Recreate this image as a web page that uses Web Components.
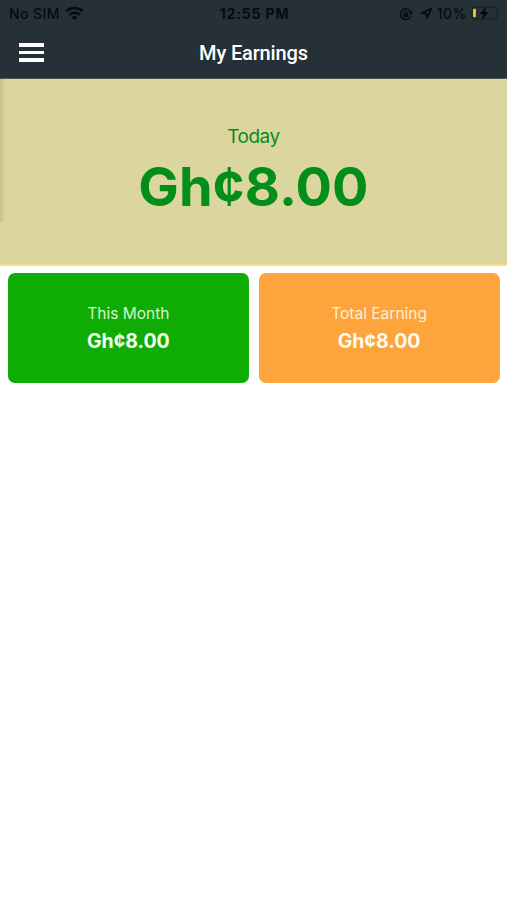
<!DOCTYPE html>
<html lang="en">
<head>
<meta charset="utf-8">
<title>My Earnings</title>
<style>
  body { margin: 0; background: #fff; font-family: Inter, "Liberation Sans", sans-serif; }
</style>
</head>
<body>
<earnings-screen></earnings-screen>
<script>
const define = (name, html) => customElements.define(name, class extends HTMLElement {
  constructor() {
    super();
    this.attachShadow({ mode: "open" }).innerHTML = html;
  }
});

define("status-bar", `
<style>
  :host { display: grid; grid-template-columns: 1fr auto 1fr; align-items: center; height: 27px; box-sizing: border-box;
    padding: 0 6px 0 9px; color: #060b0e; font-size: 14px; line-height: 18px; }
  div { display: flex; align-items: center; white-space: nowrap; }
  .carrier { font-weight: 500; letter-spacing: 0.4px; }
  .time { font-weight: 700; letter-spacing: 0.85px; margin-left: -1px; }
  .right { justify-content: flex-end; font-weight: 500; letter-spacing: 0.5px; }
  svg { display: block; flex: none; }
  .wifi { margin-left: 5px; }
  .nav { margin: 0 4px 0 7px; }
  .battery { margin-left: 4px; }
</style>
<div class="carrier"><span>No SIM</span>
  <svg class="wifi" width="19" height="15" viewBox="0 0 19 15" fill="none" stroke="#060b0e" stroke-width="2.6">
    <path d="M1.2 5.4a12 12 0 0 1 16.6 0M4.3 8.8a7.5 7.5 0 0 1 10.4 0"/><path d="M9.5 14.2 6.7 11.3a4 4 0 0 1 5.6 0z" fill="#060b0e" stroke="none"/>
  </svg></div>
<div class="time">12:55 PM</div>
<div class="right">
  <svg width="14" height="14" viewBox="0 0 14 14" fill="none" stroke="#060b0e" stroke-width="1.5">
    <path d="M11.8 9.3A5.3 5.3 0 1 1 12.1 6"/><path d="M10 5.2h4l-2 2.9z" fill="#060b0e" stroke="none"/>
    <rect x="4.3" y="6.3" width="5" height="3.7" fill="#060b0e" stroke="none"/><path d="M5.4 6.5V5.3a1.4 1.4 0 0 1 2.8 0v1.2" stroke-width="1"/>
  </svg>
  <svg class="nav" width="13" height="13" viewBox="0 0 13 13" fill="none" stroke="#060b0e" stroke-width="1.6" stroke-linejoin="round">
    <path d="M11.3 1.7 1.5 6.1l4.9.5.4 4.9z"/>
  </svg>
  <span>10%</span>
  <svg class="battery" width="30" height="15" viewBox="0 0 30 15">
    <rect x="1" y="1.2" width="25" height="11.6" rx="3" fill="none" stroke="#182326" stroke-width="1.2"/>
    <path d="M27.3 5v4.5q1.7-.6 1.7-2.2T27.3 5z" fill="#182326"/>
    <rect x="2" y="2.8" width="2.9" height="8.4" rx=".8" fill="#e8c32c"/>
    <path d="M15.3 0 8.5 8.2h4.1L10.7 14l7.1-8.1h-4z" fill="#04080a"/>
  </svg>
</div>`);

define("menu-button", `
<style>
  :host { display: flex; flex-direction: column; gap: 4px; width: 25px; }
  i { height: 3.5px; background: #fff; }
</style><i></i><i></i><i></i>`);

define("title-bar", `
<style>
  :host { display: grid; grid-template-columns: 1fr auto 1fr; align-items: center; height: 52px; box-sizing: border-box;
    padding: 0 19px; color: #fff; border-bottom: 1px solid #4e5a50; }
  h1 { margin: 0; font: 500 20px/24px Roboto, sans-serif; letter-spacing: -0.15px; white-space: nowrap; }
</style><slot name="start"></slot><h1><slot></slot></h1>`);

define("today-panel", `
<style>
  :host { display: block; height: 187px; box-sizing: border-box; padding-top: 45px; position: relative;
    background: #dbd59f; border-bottom: 2px solid #f7df85; text-align: center; color: #028e18; white-space: nowrap; }
  .edge { position: absolute; left: 0; top: 0; width: 5px; height: 143px; background: linear-gradient(to right, #c4be8d, #dbd59f); }
  .label { font-size: 19px; line-height: 26px; letter-spacing: -0.5px; }
  .amount { font-size: 54px; line-height: 64px; font-weight: 700; margin-top: 5px; letter-spacing: 0.15px; }
</style><div class="edge"></div>
<div class="label"><slot name="label"></slot></div><div class="amount"><slot></slot></div>`);

define("earning-card", `
<style>
  :host { display: block; height: 110px; box-sizing: border-box; padding-top: 30px; border-radius: 7px;
    background: var(--card); color: var(--ink); text-align: center; white-space: nowrap; }
  .label { font-size: 15.5px; line-height: 22px; color: var(--label); }
  .amount { font-size: 19.5px; line-height: 26px; font-weight: 700; margin-top: 3px; }
</style><div class="label"><slot name="label"></slot></div><div class="amount"><slot></slot></div>`);

define("earnings-screen", `
<style>
  :host { display: block; height: 900px; background: #fff; }
  header { background: #253136; }
  main { display: grid; grid-template-columns: 1fr 1fr; gap: 10px; padding: 7px 7.5px 0 8px; }
  .month { --card: #0fac06; --ink: #f3fff0; --label: #d3f6cd; }
  .total { --card: #fda43c; --ink: #fffaf0; --label: #ffefcf; }
</style>
<header><status-bar></status-bar><title-bar><menu-button slot="start"></menu-button>My Earnings</title-bar></header>
<today-panel><span slot="label">Today</span>Gh¢8.00</today-panel>
<main>
  <earning-card class="month"><span slot="label">This Month</span>Gh¢8.00</earning-card>
  <earning-card class="total"><span slot="label">Total Earning</span>Gh¢8.00</earning-card>
</main>`);
</script>
</body>
</html>
